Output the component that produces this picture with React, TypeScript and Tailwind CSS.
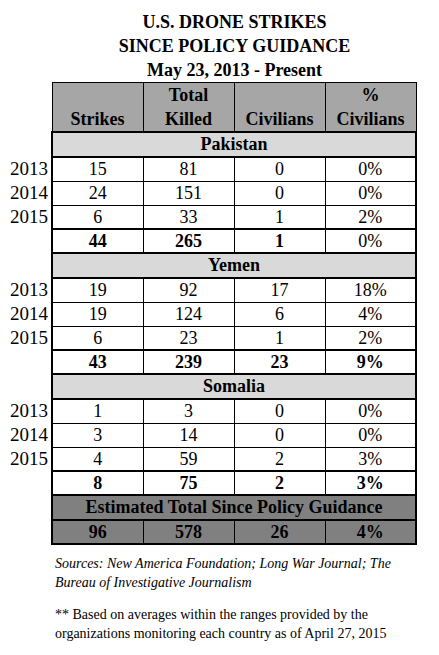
import React from "react";

type Row = { year: string; strikes: string; killed: string; civ: string; pct: string };
type Section = { name: string; rows: Row[]; total: Row; boldPct: boolean };

const sections: Section[] = [
  {
    name: "Pakistan",
    rows: [
      { year: "2013", strikes: "15", killed: "81", civ: "0", pct: "0%" },
      { year: "2014", strikes: "24", killed: "151", civ: "0", pct: "0%" },
      { year: "2015", strikes: "6", killed: "33", civ: "1", pct: "2%" },
    ],
    total: { year: "", strikes: "44", killed: "265", civ: "1", pct: "0%" },
    boldPct: false,
  },
  {
    name: "Yemen",
    rows: [
      { year: "2013", strikes: "19", killed: "92", civ: "17", pct: "18%" },
      { year: "2014", strikes: "19", killed: "124", civ: "6", pct: "4%" },
      { year: "2015", strikes: "6", killed: "23", civ: "1", pct: "2%" },
    ],
    total: { year: "", strikes: "43", killed: "239", civ: "23", pct: "9%" },
    boldPct: true,
  },
  {
    name: "Somalia",
    rows: [
      { year: "2013", strikes: "1", killed: "3", civ: "0", pct: "0%" },
      { year: "2014", strikes: "3", killed: "14", civ: "0", pct: "0%" },
      { year: "2015", strikes: "4", killed: "59", civ: "2", pct: "3%" },
    ],
    total: { year: "", strikes: "8", killed: "75", civ: "2", pct: "3%" },
    boldPct: true,
  },
];

const cell = "h-[24px] p-0 border border-black text-center leading-[22px]";

export default function App() {
  return (
    <div className="w-[439px] h-[655px] bg-white text-black font-['Liberation_Serif',serif]">
      <div className="ml-[52px] w-[365px] pt-[10px] text-center text-[18px] leading-[24px] font-bold">
        <div>U.S. DRONE STRIKES</div>
        <div>SINCE POLICY GUIDANCE</div>
        <div>May 23, 2013 - Present</div>
      </div>

      <table className="table-fixed border-collapse w-[417px] text-[18px]">
        <colgroup>
          <col className="w-[52px]" />
          <col className="w-[91px]" />
          <col className="w-[91px]" />
          <col className="w-[91px]" />
          <col className="w-[91px]" />
        </colgroup>
        <thead>
          <tr>
            <td className="p-0"></td>
            {[["", "Strikes"], ["Total", "Killed"], ["", "Civilians"], ["%", "Civilians"]].map(([a, b], i) => (
              <th
                key={i}
                className="h-[49px] p-0 align-bottom bg-[#a6a6a6] border border-black border-b-2 font-bold leading-[24px]"
              >
                {a && <div>{a}</div>}
                <div>{b}</div>
              </th>
            ))}
          </tr>
        </thead>
        <tbody>
          {sections.map((s) => (
            <React.Fragment key={s.name}>
              <tr>
                <td className="p-0"></td>
                <td
                  colSpan={4}
                  className="h-[25px] p-0 text-center font-bold leading-[23px] bg-[#d9d9d9] border-2 border-black"
                >
                  {s.name}
                </td>
              </tr>
              {s.rows.map((r) => (
                <tr key={r.year}>
                  <td className="p-0 pr-[3px] text-right text-[19px] leading-[22px]">{r.year}</td>
                  <td className={`${cell} border-l-2`}>{r.strikes}</td>
                  <td className={cell}>{r.killed}</td>
                  <td className={cell}>{r.civ}</td>
                  <td className={`${cell} border-r-2`}>{r.pct}</td>
                </tr>
              ))}
              <tr className="font-bold">
                <td className="p-0"></td>
                <td className={`${cell} border-l-2 border-t-2`}>{s.total.strikes}</td>
                <td className={`${cell} border-t-2`}>{s.total.killed}</td>
                <td className={`${cell} border-t-2`}>{s.total.civ}</td>
                <td className={`${cell} border-r-2 border-t-2 ${s.boldPct ? "font-bold" : "font-normal"}`}>
                  {s.total.pct}
                </td>
              </tr>
            </React.Fragment>
          ))}
          <tr>
            <td className="p-0"></td>
            <td
              colSpan={4}
              className="h-[25px] p-0 text-center font-bold leading-[23px] bg-[#808080] border-2 border-black"
            >
              Estimated Total Since Policy Guidance
            </td>
          </tr>
          <tr className="font-bold">
            <td className="p-0"></td>
            <td className={`${cell} bg-[#808080] border-l-2 border-b-2`}>96</td>
            <td className={`${cell} bg-[#808080] border-b-2`}>578</td>
            <td className={`${cell} bg-[#808080] border-b-2`}>26</td>
            <td className={`${cell} bg-[#808080] border-r-2 border-b-2`}>4%</td>
          </tr>
        </tbody>
      </table>

      <div className="ml-[55px] mt-[9px] w-[360px] text-[14px] leading-[19px]">
        <p className="italic">
          Sources: New America Foundation; Long War Journal; The Bureau of Investigative Journalism
        </p>
        <p className="mt-[13px]">
          ** Based on averages within the ranges provided by the organizations monitoring each country as of April 27, 2015
        </p>
      </div>
    </div>
  );
}
